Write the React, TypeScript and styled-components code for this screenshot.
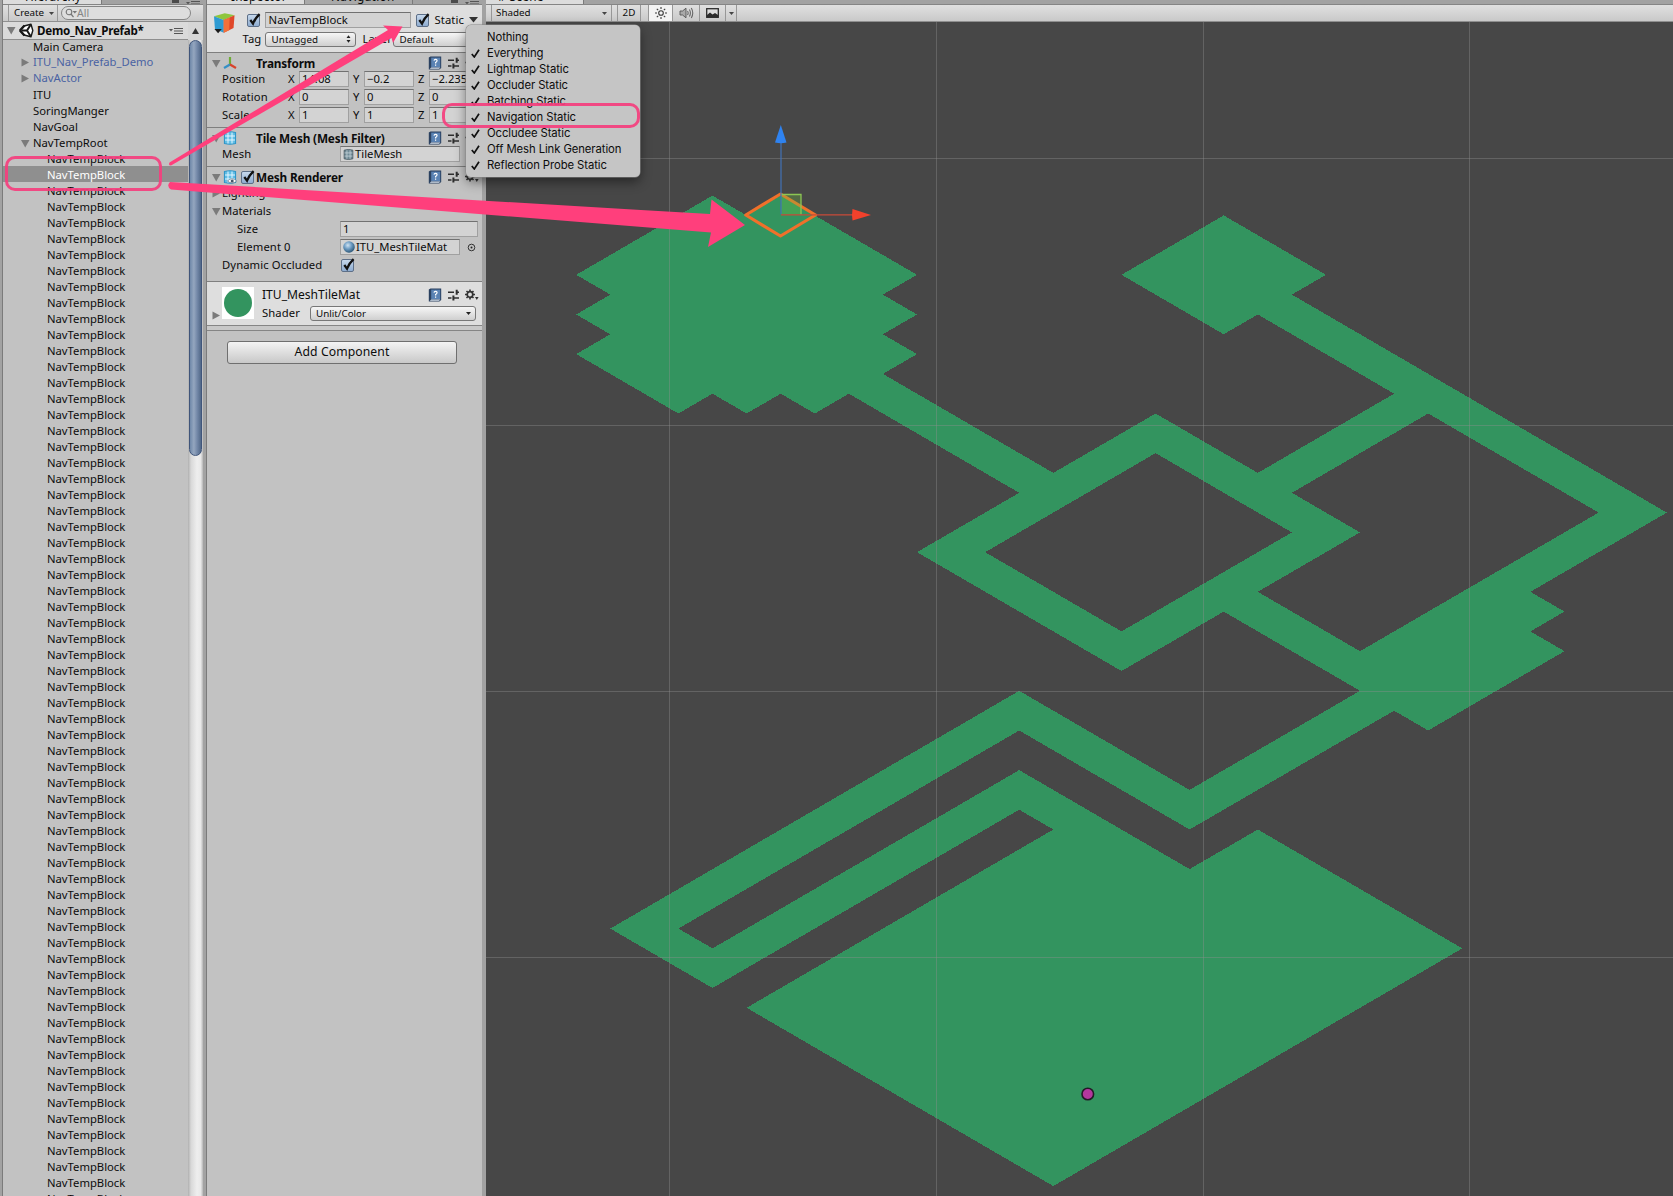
import React from 'react';
import styled, { createGlobalStyle } from 'styled-components';

const Global = createGlobalStyle`
  * { box-sizing: border-box; }
  body { margin: 0; background: #a2a2a2; overflow: hidden; }
`;

const PINK = '#ff3f7c';

const Editor = styled.div`
  position: relative;
  display: flex;
  width: 1673px;
  height: 1196px;
  overflow: hidden;
  background: #a2a2a2;
  color: #0c0c0c;
  font: 11.25px/16px 'Noto Sans', 'Open Sans', sans-serif;
  white-space: nowrap;
`;

const Panel = styled.section<{ $w: number; $left: number }>`
  flex: none;
  display: flex;
  flex-direction: column;
  width: ${p => p.$w}px;
  margin-left: ${p => p.$left}px;
  background: #c2c2c2;
  box-shadow: -1px 0 0 #7b7b7b;
`;

const ScenePanel = styled.section`
  flex: 1;
  display: flex;
  flex-direction: column;
  margin-left: 4px;
  min-width: 0;
`;

const TabStrip = styled.div`
  flex: none;
  display: flex;
  height: 5px;
  overflow: hidden;
  background: #a2a2a2;
  border-bottom: 1px solid #858585;
`;

const Tab = styled.div<{ $w: number; $pad: number; $active?: boolean }>`
  width: ${p => p.$w}px;
  height: 5px;
  padding-left: ${p => p.$pad}px;
  background: ${p => (p.$active ? '#dcdcdc' : '#a9a9a9')};
  border-right: 1px solid #7a7a7a;
  font-size: 11.8px;
  line-height: 16px;
  letter-spacing: 0.35px;
  & > span { display: block; margin-top: -12px; }
`;

const TabTools = styled.div`
  display: flex;
  gap: 7px;
  margin-left: auto;
  padding-right: 3px;
`;

const Toolbar = styled.div`
  flex: none;
  display: flex;
  align-items: center;
  height: 17px;
  background: linear-gradient(#e0e0e0, #c9c9c9);
  border-bottom: 1px solid #8f8f8f;
`;

const CreateButton = styled.div`
  display: flex;
  align-items: center;
  gap: 5px;
  width: 50px;
  height: 16px;
  margin-left: 5px;
  padding-left: 5px;
  border-left: 1px solid #9a9a9a;
  border-right: 1px solid #9a9a9a;
  font-size: 9.8px;
`;

const Search = styled.div`
  display: flex;
  align-items: center;
  width: 130px;
  height: 14px;
  margin-left: 3px;
  padding-left: 3px;
  border: 1px solid #858585;
  border-radius: 7px;
  background: #dedede;
  color: #858585;
  font-size: 10.5px;
`;

const HierarchyBody = styled.div`
  flex: 1;
  display: flex;
  min-height: 0;
`;

const Tree = styled.div`
  width: 185px;
  overflow: hidden;
`;

const TreeRows = styled.div`
  margin-top: -2px;
`;

const SceneRow = styled.div`
  display: flex;
  align-items: center;
  height: 18px;
  padding: 0 5px 0 4px;
  gap: 3px;
  background: #dadada;
  border-bottom: 1px solid #8e8e8e;
  font-size: 11.6px;
  font-weight: 700;
  letter-spacing: -0.25px;
  & > svg:last-child { margin-left: auto; }
`;

const TreeRow = styled.div<{ $depth: number; $link?: boolean; $selected?: boolean }>`
  display: flex;
  align-items: center;
  height: 16px;
  padding: ${p => (p.$link ? 0 : 2)}px 0 0 ${p => 4 + p.$depth * 14}px;
  background: ${p => (p.$selected ? '#8f8f8f' : 'transparent')};
  color: ${p => (p.$selected ? '#fff' : p.$link ? '#4a62a3' : '#0c0c0c')};
`;

const FoldSlot = styled.span`
  display: flex;
  width: 12px;
`;

const ScrollBar = styled.div`
  width: 15px;
  display: flex;
  flex-direction: column;
  background: linear-gradient(90deg, #b0b0b0, #d8d8d8 20%, #eeeeee 60%, #e8e8e8 85%, #b5b5b5);
`;

const ScrollArrow = styled.div`
  display: flex;
  align-items: center;
  justify-content: center;
  height: 18px;
  background: #d6d6d6;
`;

const ScrollThumb = styled.div`
  height: 416px;
  margin: 0 1px;
  border: 1px solid #40557a;
  border-radius: 7px;
  background: linear-gradient(90deg, #6f88a9, #94a6bf 35%, #7388a8 65%, #516888);
`;

const ObjectHeader = styled.div`
  flex: none;
  height: 48px;
  padding: 7px 4px 0 6px;
  display: flex;
  gap: 6px;
  background: #dedede;
  border-bottom: 1px solid #7f7f7f;
`;

const ObjectRows = styled.div`
  display: flex;
  flex-direction: column;
  gap: 3px;
`;

const Line = styled.div<{ $gap?: number; $pad?: number }>`
  display: flex;
  align-items: center;
  height: 16px;
  gap: ${p => p.$gap ?? 0}px;
  padding-left: ${p => p.$pad ?? 0}px;
  letter-spacing: 0.1px;
`;

const Field = styled.div<{ $w: number }>`
  display: flex;
  align-items: center;
  gap: 1px;
  flex: none;
  width: ${p => p.$w}px;
  height: 16px;
  padding-left: 2px;
  border: 1px solid #a0a0a0;
  border-top-color: #717171;
  background: #d3d3d3;
  line-height: 14px;
`;

const Popup = styled.div<{ $w: number }>`
  display: flex;
  align-items: center;
  justify-content: space-between;
  flex: none;
  width: ${p => p.$w}px;
  height: 15px;
  padding: 0 4px 0 5px;
  border: 1px solid #777;
  border-radius: 3px;
  background: linear-gradient(#f6f6f6, #cfcfcf);
  font-size: 9.8px;
  line-height: 13px;
`;

const CheckBox = styled.span`
  display: flex;
  flex: none;
  width: 13px;
  height: 13px;
  border: 1px solid #5d6f88;
  border-radius: 2px;
  background: linear-gradient(#c6d8ec, #8eacd0);
  & > svg { flex: none; margin: -2px 0 0 0; overflow: visible; }
`;

const Component = styled.div<{ $h: number }>`
  flex: none;
  height: ${p => p.$h}px;
  padding-top: 1px;
  border-bottom: 1px solid #7f7f7f;
`;

const ComponentHead = styled.div`
  display: flex;
  align-items: center;
  height: 18px;
  margin-bottom: -2px;
  padding: 0 3px 0 5px;
`;

const HeadIcons = styled.div`
  flex: none;
  width: 35px;
  display: flex;
  align-items: center;
  gap: 4px;
  padding-left: 2px;
`;

const Title = styled.b`
  flex: 1;
  font-size: 11.8px;
  letter-spacing: -0.17px;
`;

const HeadTools = styled.div`
  display: flex;
  align-items: center;
  gap: 6px;
`;

const PropRow = styled.div<{ $pad?: number }>`
  display: flex;
  align-items: center;
  height: 18px;
  padding-left: ${p => p.$pad ?? 15}px;
`;

const Label = styled.span<{ $w: number }>`
  flex: none;
  width: ${p => p.$w}px;
  letter-spacing: 0.1px;
`;

const FoldCell = styled.span`
  display: flex;
  flex: none;
  width: 10px;
`;

const Axis = styled.span`
  flex: none;
  width: 11px;
`;

const AxisCell = styled.div`
  display: flex;
  align-items: center;
  margin-right: 4px;
`;

const Material = styled.div`
  flex: none;
  display: flex;
  height: 44px;
  padding: 5px 3px 0 5px;
  background: #dedede;
  border-bottom: 1px solid #858585;
`;

const MaterialFold = styled.div`
  display: flex;
  width: 10px;
  padding-top: 24px;
`;

const Swatch = styled.div`
  flex: none;
  display: flex;
  align-items: center;
  justify-content: center;
  width: 32px;
  height: 32px;
  background: #fff;
`;

const MaterialInfo = styled.div`
  flex: 1;
  padding-left: 8px;
`;

const MaterialTitle = styled.div`
  display: flex;
  align-items: center;
  justify-content: space-between;
  height: 17px;
  padding-bottom: 2px;
  font-size: 12.1px;
`;

const Strip = styled.div`
  flex: none;
  height: 5px;
  border-bottom: 1px solid #858585;
  background: #c8c8c8;
`;

const AddButton = styled.div`
  flex: none;
  width: 230px;
  height: 23px;
  margin: 10px auto 0 20px;
  border: 1px solid #6f6f6f;
  border-radius: 3px;
  background: linear-gradient(#f4f4f4, #c8c8c8);
  text-align: center;
  font-size: 12.2px;
  letter-spacing: 0.1px;
  line-height: 20px;
`;

const SceneTool = styled.div<{ $w: number; $on?: boolean; $between?: boolean; $left?: number }>`
  display: flex;
  align-items: center;
  justify-content: ${p => (p.$between ? 'space-between' : 'center')};
  width: ${p => p.$w}px;
  height: 16px;
  margin-left: ${p => p.$left ?? 0}px;
  padding: 0 ${p => (p.$between ? 4 : 0)}px;
  border-right: 1px solid #979797;
  border-left: ${p => (p.$left ? '1px solid #979797' : 'none')};
  background: ${p => (p.$on ? '#f3f3f3' : 'transparent')};
  font-size: 9.8px;
`;

const Viewport = styled.div`
  flex: 1;
  min-height: 0;
  background: #474747;
  & > svg { display: block; }
`;

const Menu = styled.div`
  position: absolute;
  left: 466px;
  top: 25px;
  width: 174px;
  height: 152px;
  padding-top: 4px;
  border-radius: 5px;
  background: #c5c5c5;
  box-shadow: 0 0 0 0.5px #8a8a8a, 0 5px 12px rgba(0, 0, 0, 0.45);
  font: 11.3px/16px Inter, 'Liberation Sans', sans-serif;
  letter-spacing: -0.08px;
`;

const MenuItem = styled.div`
  display: flex;
  align-items: center;
  height: 16px;
  padding-left: 5px;
`;

const CheckSlot = styled.span`
  display: flex;
  width: 16px;
`;

const Ring = styled.div<{ $x: number; $y: number; $w: number; $h: number }>`
  position: absolute;
  left: ${p => p.$x}px;
  top: ${p => p.$y}px;
  width: ${p => p.$w}px;
  height: ${p => p.$h}px;
  border: 3px solid #f4407e;
  border-radius: 10px;
  opacity: 0.93;
`;

const ArrowLayer = styled.svg`
  position: absolute;
  left: 0;
  top: 0;
  pointer-events: none;
`;

const Fold = ({ open }: { open?: boolean }) => (
  <svg width="9" height="9" viewBox="0 0 9 9">
    <path d={open ? 'M0 1H8.5L4.2 8.5Z' : 'M.5 .5L8 4.5L.5 8.5Z'} fill="#7b7b7b" />
  </svg>
);

const Down = ({ w = 5, c = '#444' }: { w?: number; c?: string }) => (
  <svg width={w} height={w * 0.6} viewBox="0 0 10 6"><path d="M0 0H10L5 6Z" fill={c} /></svg>
);

const Burger = () => (
  <svg width="14" height="8" viewBox="0 0 14 8">
    <path d="M0 2H4L2 4.5Z" fill="#555" />
    <path d="M5 1.5H14M5 4H14M5 6.5H14" stroke="#555" />
  </svg>
);

const Lock = () => (
  <svg width="7" height="5" viewBox="0 0 7 5"><rect width="7" height="3" fill="#4b4b4b" /></svg>
);

const UnityLogo = () => (
  <svg width="15" height="15" viewBox="0 0 15 15">
    <path d="M1 7.5L5 3L12 1.2L13.8 7.5L12 13.8L5 12Z" fill="#fff" stroke="#181818" strokeWidth="1.4" strokeLinejoin="round" />
    <path d="M1 7.5L5.5 2.5M1 7.5L5.5 12.5" stroke="#181818" strokeWidth="2.4" />
    <path d="M2.5 7.5H8L11.5 2M8 7.5L11.5 13" fill="none" stroke="#181818" strokeWidth="2" />
  </svg>
);

const Cube = () => (
  <svg width="24" height="24" viewBox="0 0 24 24">
    <path d="M1 4L12 1L22 3L11 8Z" fill="#8fc63d" />
    <path d="M1 4L11 8V21L2 17Z" fill="#2f9bd2" />
    <path d="M11 8L22 3L21 16L11 21Z" fill="#e0482a" />
    <path d="M11 8L17 5.3L16.5 18.3L11 21Z" fill="#f2703a" />
    <path d="M1.5 17H9L5.2 21.5Z" fill="#1c1c1c" />
  </svg>
);

const Tick = () => (
  <CheckBox>
    <svg width="13" height="13" viewBox="0 0 13 13">
      <path d="M2.3 7L5 10.6Q7 5.5 11.6 1.2" fill="none" stroke="#111" strokeWidth="2.3" />
    </svg>
  </CheckBox>
);

const Book = () => (
  <svg width="14" height="14" viewBox="0 0 14 14">
    <path d="M.8 1.5L2.5 .4H13.2V12L11.3 13.6H.8Z" fill="#2b4160" />
    <path d="M3.2 1.6H12.2V11.2H3.2Z" fill="#5a82b3" />
    <path d="M1.7 12.8L3.2 11.6H12.4L11 12.8Z" fill="#dce4ee" />
    <path d="M6 4.6Q6.2 3.2 7.7 3.3Q9.3 3.5 9 4.8Q8.8 5.6 7.6 6.5V7.4M7.6 8.4V9.7" fill="none" stroke="#fff" strokeWidth="1.2" />
  </svg>
);

const Preset = () => (
  <svg width="11" height="12" viewBox="0 0 11 12">
    <path d="M0 3.3H6M8.5 3.3H11M0 9H3.5M6 9H11" stroke="#2e2e2e" strokeWidth="1.6" />
    <path d="M8.7 .8V5.8M5.4 6.5V11.5" stroke="#2e2e2e" strokeWidth="2" />
  </svg>
);

const Gear = () => (
  <svg width="14" height="12" viewBox="0 0 14 12">
    <circle cx="5" cy="5.5" r="2.8" fill="none" stroke="#333" strokeWidth="1.7" />
    <path d="M5 .5V2.6M5 8.4V10.5M0 5.5H2.1M7.9 5.5H10M1.5 2L3 3.5M7 7.5L8.5 9M8.5 2L7 3.5M1.5 9L3 7.5" stroke="#333" strokeWidth="1.6" />
    <path d="M10 8H13.6L11.8 11Z" fill="#333" />
  </svg>
);

const Axes = () => (
  <svg width="14" height="14" viewBox="0 0 14 14">
    <path d="M7 1V9" stroke="#6eac35" strokeWidth="2.2" />
    <path d="M7 8.5L1 12" stroke="#3490c6" strokeWidth="2.2" />
    <path d="M7 8.5L13 12" stroke="#d8432b" strokeWidth="2.2" />
  </svg>
);

const MeshIcon = ({ eye, small }: { eye?: boolean; small?: boolean }) => (
  <svg width={small ? 11 : 14} height={small ? 11 : 14} viewBox="0 0 14 14">
    <path d="M1.5 1.5Q7 0 12.5 1.5V12.5Q7 14 1.5 12.5Z" fill={small ? '#6f8a96' : '#62bfe6'} stroke={small ? '#4f6068' : '#2f96c8'} strokeWidth="1.2" />
    <path d="M5 1.5V12.5M9 1.5V12.5M2 5H12M2 9H12" stroke={small ? '#c6d3d9' : '#e4f6ff'} />
    {eye && <path d="M4.5 11Q9 6.5 13.8 11Q9 15 4.5 11Z" fill="#fff" stroke="#678" strokeWidth=".7" />}
    {eye && <circle cx="9.2" cy="11" r="1.5" fill="#456" />}
  </svg>
);

const Ball = () => (
  <svg width="12" height="12" viewBox="0 0 11 11">
    <defs>
      <radialGradient id="ball" cx=".4" cy=".35" r=".65">
        <stop offset="0" stopColor="#cfe3f2" />
        <stop offset=".5" stopColor="#6d9cc3" />
        <stop offset="1" stopColor="#2f5878" />
      </radialGradient>
    </defs>
    <circle cx="5.5" cy="5.5" r="5.3" fill="url(#ball)" />
  </svg>
);

const Picker = () => (
  <svg width="9" height="9" viewBox="0 0 9 9">
    <circle cx="4.5" cy="4.5" r="3.3" fill="none" stroke="#333" />
    <circle cx="4.5" cy="4.5" r="1" fill="#222" />
  </svg>
);

const UpDown = () => (
  <svg width="5" height="8" viewBox="0 0 5 8"><path d="M.5 3L2.5 .3L4.5 3ZM.5 5L2.5 7.7L4.5 5Z" fill="#222" /></svg>
);

const MenuTick = () => (
  <svg width="9" height="9" viewBox="0 0 9 9">
    <path d="M.8 5L3.3 8L8 .8" fill="none" stroke="#111" strokeWidth="1.7" />
  </svg>
);

const Sun = () => (
  <svg width="12" height="12" viewBox="0 0 12 12">
    <circle cx="6" cy="6" r="2.3" fill="none" stroke="#3a3a3a" strokeWidth="1.1" />
    <path d="M6 0V2M6 10V12M0 6H2M10 6H12M1.8 1.8L3.2 3.2M8.8 8.8L10.2 10.2M10.2 1.8L8.8 3.2M1.8 10.2L3.2 8.8" stroke="#3a3a3a" strokeWidth="1.1" />
  </svg>
);

const Speaker = () => (
  <svg width="15" height="12" viewBox="0 0 15 12">
    <path d="M1 4H3.5L7 1.2V10.8L3.5 8H1Z" fill="#a9a9a9" stroke="#555" strokeWidth=".9" />
    <path d="M8.5 4Q9.8 6 8.5 8M10.4 2.5Q12.4 6 10.4 9.5M12.3 1Q15.2 6 12.3 11" fill="none" stroke="#666" strokeWidth="1.1" />
  </svg>
);

const Picture = () => (
  <svg width="13" height="10" viewBox="0 0 13 10">
    <rect x=".7" y=".7" width="11.6" height="8.6" fill="#ddd" stroke="#2b2b2b" strokeWidth="1.3" />
    <path d="M1 9.5V7L4 4.6L6.5 6.5L9 5L12 7V9.5Z" fill="#2b2b2b" />
  </svg>
);

const Tools = () => (
  <HeadTools><Book /><Preset /><Gear /></HeadTools>
);

const ComponentTitle = ({ icon, name }: { icon: React.ReactNode; name: string }) => (
  <ComponentHead>
    <Fold open />
    <HeadIcons>{icon}</HeadIcons>
    <Title>{name}</Title>
    <Tools />
  </ComponentHead>
);

const TRANSFORM = [
  { name: 'Position', v: ['14.08', '−0.2', '−2.235'] },
  { name: 'Rotation', v: ['0', '0', '0'] },
  { name: 'Scale', v: ['1', '1', '1'] },
];

const MENU = ['Nothing', 'Everything', 'Lightmap Static', 'Occluder Static', 'Batching Static', 'Navigation Static', 'Occludee Static', 'Off Mesh Link Generation', 'Reflection Probe Static'];

const ROOTS = [
  { name: 'Main Camera' },
  { name: 'ITU_Nav_Prefab_Demo', fold: 'closed', link: true },
  { name: 'NavActor', fold: 'closed', link: true },
  { name: 'ITU' },
  { name: 'SoringManger' },
  { name: 'NavGoal' },
  { name: 'NavTempRoot', fold: 'open' },
];

/* Tile corners on the isometric lattice: [column, row]. */
const OUTLINE: number[][] = [
  [4, 0], [5, 1], [6, 0], [10, 4], [9, 5], [10, 6], [9, 7], [10, 8], [9, 9], [14, 14], [17, 11], [20, 14], [24, 10],
  [20, 6], [19, 7], [16, 4], [19, 1], [22, 4], [21, 5], [32, 16], [28, 20], [29, 21], [28, 22], [29, 23], [25, 27],
  [24, 26], [18, 32], [13, 27], [3, 37], [4, 38], [13, 29], [18, 34], [20, 32], [26, 38], [14, 50], [5, 41], [14, 32],
  [13, 31], [4, 40], [1, 37], [13, 25], [18, 30], [23, 25], [19, 21], [16, 24], [10, 18], [13, 15], [8, 10], [7, 11],
  [6, 10], [5, 11], [4, 10], [3, 11], [0, 8], [1, 7], [0, 6], [1, 5], [0, 4],
];
const HOLES: number[][][] = [
  [[17, 13], [21, 17], [16, 22], [12, 18]],
  [[25, 11], [30, 16], [23, 23], [20, 20], [23, 17], [21, 15]],
];

const corner = ([i, j]: number[]) => `${(576.2 + 34.08 * i).toFixed(1)} ${(195.6 + 19.81 * j).toFixed(1)}`;
const loop = (pts: number[][]) => `M${pts.map(corner).join('L')}Z`;
const LEVEL = [OUTLINE, ...HOLES].map(loop).join('');

const SceneView = () => (
  <svg width="1187" height="1174" viewBox="486 22 1187 1174">
    <path d={LEVEL} fill="#33945f" fillRule="evenodd" shapeRendering="crispEdges" />
    <path d="M669.5 22V1196M936.5 22V1196M1203.5 22V1196M1469.5 22V1196M486 158.5H1673M486 425.5H1673M486 691.5H1673M486 957.5H1673" stroke="#8f8f8f" strokeOpacity=".4" />
    <path d="M780.5 194L815.5 215L780.5 236L745.8 215Z" fill="none" stroke="#f0702a" strokeWidth="3.2" strokeLinejoin="round" />
    <rect x="781" y="194.5" width="20" height="20" fill="#6fc040" fillOpacity=".3" />
    <path d="M781 194.5H801V214.5" fill="none" stroke="#8cc653" strokeWidth="1.3" />
    <path d="M781 214.5V142" stroke="#4272b8" strokeWidth="1.2" />
    <path d="M775 142.5L780.8 125L786.5 142.5Q781 144 775 142.5Z" fill="#2f83f0" />
    <path d="M781 214.8H853" stroke="#c84a38" strokeWidth="1.2" />
    <path d="M852.5 209L871 215L852.5 220.5Q851.5 215 852.5 209Z" fill="#f2412c" />
    <circle cx="1087.8" cy="1094" r="5.8" fill="#b3379d" stroke="#231a26" strokeWidth="1.6" />
  </svg>
);

export default function App() {
  return (
    <Editor>
      <Global />
      <Panel $w={200} $left={3}>
        <TabStrip>
          <Tab $w={99} $pad={22} $active><span>Hierarchy</span></Tab>
          <TabTools><Lock /><Burger /></TabTools>
        </TabStrip>
        <Toolbar>
          <CreateButton>Create <Down /></CreateButton>
          <Search>
            <svg width="12" height="10" viewBox="0 0 12 10">
              <circle cx="4" cy="4" r="2.8" fill="none" stroke="#777" strokeWidth="1.1" />
              <path d="M6 6L8.5 9.2" stroke="#777" strokeWidth="1.3" />
              <path d="M7.5 3H12L9.8 5.5Z" fill="#777" />
            </svg>
            All
          </Search>
        </Toolbar>
        <HierarchyBody>
          <Tree>
            <SceneRow><Fold open /><UnityLogo /><span>Demo_Nav_Prefab*</span><Burger /></SceneRow>
            <TreeRows>
              {ROOTS.map(r => (
                <TreeRow key={r.name} $depth={1} $link={r.link}>
                  <FoldSlot>{r.fold && <Fold open={r.fold === 'open'} />}</FoldSlot>
                  {r.name}
                </TreeRow>
              ))}
              {Array.from({ length: 66 }, (_, k) => (
                <TreeRow key={k} $depth={2} $selected={k === 1}><FoldSlot />NavTempBlock</TreeRow>
              ))}
            </TreeRows>
          </Tree>
          <ScrollBar>
            <ScrollArrow><svg width="7" height="6" viewBox="0 0 7 6"><path d="M3.5 0L7 6H0Z" fill="#333" /></svg></ScrollArrow>
            <ScrollThumb />
          </ScrollBar>
        </HierarchyBody>
      </Panel>

      <Panel $w={275} $left={4}>
        <TabStrip>
          <Tab $w={98} $pad={24} $active><span>Inspector</span></Tab>
          <Tab $w={108} $pad={26}><span>Navigation</span></Tab>
          <TabTools><Lock /><Burger /></TabTools>
        </TabStrip>
        <ObjectHeader>
          <Cube />
          <ObjectRows>
            <Line $pad={5} $gap={5}>
              <Tick />
              <Field $w={146}>NavTempBlock</Field>
              <Tick />
              <Line $gap={5}>Static <Down w={9} c="#333" /></Line>
            </Line>
            <Line>
              <Label $w={23}>Tag</Label>
              <Popup $w={91}>Untagged<UpDown /></Popup>
              <Line $pad={6} $gap={2}><Label $w={29}>Layer</Label><Popup $w={80}>Default</Popup></Line>
            </Line>
          </ObjectRows>
        </ObjectHeader>
        <Component $h={75}>
          <ComponentTitle icon={<Axes />} name="Transform" />
          {TRANSFORM.map(t => (
            <PropRow key={t.name}>
              <Label $w={66}>{t.name}</Label>
              {['X', 'Y', 'Z'].map((a, n) => (
                <AxisCell key={a}><Axis>{a}</Axis><Field $w={50}>{t.v[n]}</Field></AxisCell>
              ))}
            </PropRow>
          ))}
        </Component>
        <Component $h={39}>
          <ComponentTitle icon={<MeshIcon />} name="Tile Mesh (Mesh Filter)" />
          <PropRow><Label $w={118}>Mesh</Label><Field $w={120}><MeshIcon small />TileMesh</Field></PropRow>
        </Component>
        <Component $h={115}>
          <ComponentTitle icon={<><MeshIcon eye /><Tick /></>} name="Mesh Renderer" />
          <PropRow $pad={5}><FoldCell><Fold /></FoldCell>Lighting</PropRow>
          <PropRow $pad={5}><FoldCell><Fold open /></FoldCell>Materials</PropRow>
          <PropRow $pad={30}><Label $w={103}>Size</Label><Field $w={138}>1</Field></PropRow>
          <PropRow $pad={30}><Label $w={103}>Element 0</Label><Field $w={120}><Ball />ITU_MeshTileMat</Field><Line $pad={7}><Picker /></Line></PropRow>
          <PropRow><Label $w={119}>Dynamic Occluded</Label><Tick /></PropRow>
        </Component>
        <Material>
          <MaterialFold><Fold /></MaterialFold>
          <Swatch><svg width="28" height="28" viewBox="0 0 28 28"><circle cx="14" cy="14" r="14" fill="#33945f" /></svg></Swatch>
          <MaterialInfo>
            <MaterialTitle>ITU_MeshTileMat<Tools /></MaterialTitle>
            <PropRow $pad={0}><Label $w={48}>Shader</Label><Popup $w={166}>Unlit/Color<Down w={5} c="#222" /></Popup></PropRow>
          </MaterialInfo>
        </Material>
        <Strip />
        <AddButton>Add Component</AddButton>
      </Panel>

      <ScenePanel>
        <TabStrip>
          <Tab $w={98} $pad={12} $active><span># Scene</span></Tab>
        </TabStrip>
        <Toolbar>
          <SceneTool $w={121} $left={5} $between>Shaded<Down /></SceneTool>
          <SceneTool $w={24} $left={5}>2D</SceneTool>
          <SceneTool $w={25} $left={7} $on><Sun /></SceneTool>
          <SceneTool $w={27}><Speaker /></SceneTool>
          <SceneTool $w={26}><Picture /></SceneTool>
          <SceneTool $w={11}><Down /></SceneTool>
        </Toolbar>
        <Viewport><SceneView /></Viewport>
      </ScenePanel>

      <Menu>
        {MENU.map((m, n) => (
          <MenuItem key={m}><CheckSlot>{n > 0 && <MenuTick />}</CheckSlot>{m}</MenuItem>
        ))}
      </Menu>
      <Ring $x={5} $y={156} $w={157} $h={35} />
      <Ring $x={442} $y={103} $w={198} $h={25} />
      <ArrowLayer width="1673" height="1196" viewBox="0 0 1673 1196">
        <path d="M169.5 162.5L388 30L383 25.5L402.5 26.5L393 43L391.5 38L171 165.5Q168 165.5 169.5 162.5Z" fill={PINK} />
        <path d="M170 182L641 213L641 213L640 199.5L642 213.5L710.5 214L711.5 199.5L745 225L708 247L711 232.5L171 189.5Q166 186 170 182Z" fill="none" />
        <path d="M170 182L641 210L710 214L711.5 199.5L745 225L708 247L711 232.5L171 189.5Q166 186 170 182Z" fill={PINK} />
      </ArrowLayer>
    </Editor>
  );
}
